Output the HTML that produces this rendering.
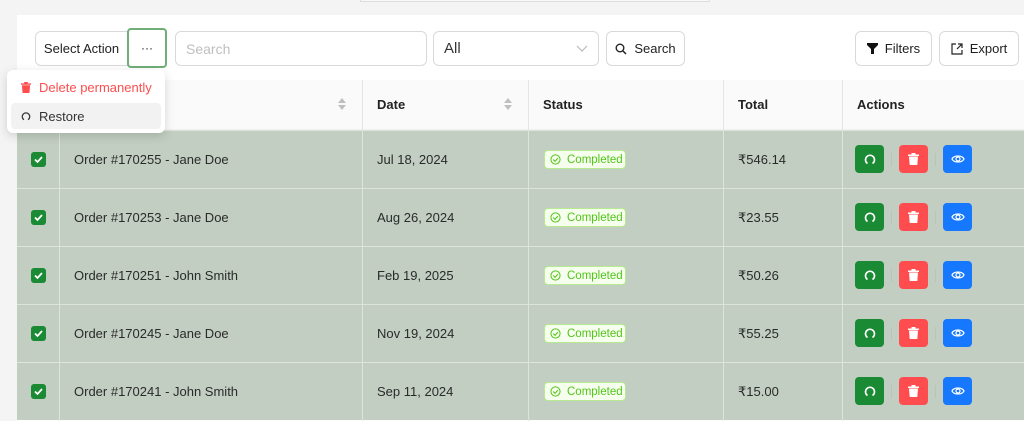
<!DOCTYPE html>
<html><head><style>
*{box-sizing:border-box;margin:0;padding:0}
body{width:1024px;height:421px;overflow:hidden;background:#f4f4f4;font-family:"Liberation Sans",sans-serif;font-size:13px;color:#1f1f1f;position:relative}
.a{position:absolute}
.card{left:17px;top:15px;width:1007px;height:406px;background:#fff}
.btn{position:absolute;border:1px solid #d9d9d9;border-radius:6px;background:#fff;display:flex;align-items:center;justify-content:center;font-size:13px;color:#1f1f1f;gap:7px}
.th{position:absolute;top:80px;height:50px;background:#fafafa;border-bottom:1px solid #f0f0f0;font-weight:bold;font-size:13px;display:flex;align-items:center;padding-left:15px;color:#222}
.sep{position:absolute;width:1px;background:#e5e5e5}
.row{position:absolute;left:17px;width:1007px;height:58px;background:#c2cec2;border-top:1px solid #dde4dc;color:#2a2a2a}
.cell{position:absolute;top:0;height:57px;display:flex;align-items:center}
.cb{position:absolute;left:14px;top:21px;width:15px;height:15px;border-radius:3px;background:#1a8a34}
.badge{position:absolute;left:527px;top:19px;width:82px;height:19px;border:1px solid #b7eb8f;background:#f6ffed;border-radius:4px;color:#52c41a;font-size:11.5px;line-height:19px;padding-left:22px}
.badge svg{position:absolute;left:5px;top:3px}
.ab{position:absolute;top:14px;width:29px;height:28px;border-radius:4px;display:flex;align-items:center;justify-content:center}
.vs{position:absolute;top:22px;width:1px;height:13px;background:#b8c4b8}
.sort{position:absolute;top:98px;width:8px}
</style></head><body>
<div class="a" style="left:360px;top:0;width:350px;height:2px;border:1px solid #ddd;border-top:none;background:#f8f8f8"></div>
<div class="a card"></div>
<div class="btn" style="left:35px;top:31px;width:93px;height:35px;border-radius:6px 0 0 6px">Select Action</div>
<div class="btn" style="left:127px;top:28px;width:40px;height:40px;border:2px solid #6fae77;border-radius:4px;font-size:12px">···</div>
<div class="btn" style="left:175px;top:31px;width:252px;height:35px;justify-content:flex-start;padding-left:10px;color:#bfbfbf;font-size:14px">Search</div>
<div class="btn" style="left:433px;top:31px;width:166px;height:35px;justify-content:space-between;padding:0 10px;font-size:15px;color:#333">All<svg width="12" height="8" viewBox="0 0 12 8"><path d="M1 1l5 5 5-5" fill="none" stroke="#bbb" stroke-width="1.2"/></svg></div>
<div class="btn" style="left:606px;top:31px;width:79px;height:35px"><svg width="12" height="12" viewBox="0 0 12 12"><circle cx="5" cy="5" r="3.8" fill="none" stroke="#222" stroke-width="1.4"/><path d="M8 8l3 3" stroke="#222" stroke-width="1.5"/></svg>Search</div>
<div class="btn" style="left:855px;top:31px;width:77px;height:35px"><svg width="11" height="11" viewBox="0 0 11 11"><path d="M0 0h11v2L7 6v5H4V6L0 2z" fill="#111"/></svg>Filters</div>
<div class="btn" style="left:939px;top:31px;width:80px;height:35px"><svg width="12" height="12" viewBox="0 0 12 12"><path d="M5 1H1v10h10V7M7 1h4v4M11 1L6 6" fill="none" stroke="#222" stroke-width="1.2"/></svg>Export</div>

<div class="th" style="left:17px;width:345px"></div>
<div class="th" style="left:362px;width:166px">Date</div>
<div class="th" style="left:528px;width:195px">Status</div>
<div class="th" style="left:723px;width:119px">Total</div>
<div class="th" style="left:842px;width:182px">Actions</div>
<div class="sep" style="left:362px;top:80px;height:50px"></div>
<div class="sep" style="left:528px;top:80px;height:50px"></div>
<div class="sep" style="left:723px;top:80px;height:50px"></div>
<div class="sep" style="left:842px;top:80px;height:50px"></div>
<svg class="sort" style="left:338px" height="12" viewBox="0 0 8 12"><path d="M4 0l4 5H0z M4 12l4-5H0z" fill="#bfbfbf"/></svg>
<svg class="sort" style="left:504px" height="12" viewBox="0 0 8 12"><path d="M4 0l4 5H0z M4 12l4-5H0z" fill="#bfbfbf"/></svg>

<div class="row" style="top:130px"><div class="cb"><svg width="15" height="15" viewBox="0 0 15 15"><path d="M4 7.5l2.5 2.5L11 5" fill="none" stroke="#fff" stroke-width="1.8"/></svg></div><div class="cell" style="left:57px">Order #170255 - Jane Doe</div><div class="cell" style="left:360px">Jul 18, 2024</div><div class="badge"><svg width="11" height="11" viewBox="0 0 12 12"><circle cx="6" cy="6" r="5" fill="none" stroke="#52c41a" stroke-width="1.1"/><path d="M3.5 6l2 2 3-3.5" fill="none" stroke="#52c41a" stroke-width="1.1"/></svg>Completed</div><div class="cell" style="left:721px">₹546.14</div><div class="ab" style="left:838px;background:#1a8a34"><svg width="12" height="12" viewBox="0 0 12 12"><path d="M3.5 10.5A4.5 4.5 0 1 1 8.5 10.5" fill="none" stroke="#fff" stroke-width="1.6"/></svg></div><div class="vs" style="left:874px"></div><div class="ab" style="left:882px;background:#ff4d4f"><svg width="11" height="12" viewBox="0 0 11 12"><path d="M0 1.5h11v1.5H0zM3.5 0h4v1.5h-4zM1 3.5h9l-.7 8.5H1.7z" fill="#fff"/></svg></div><div class="vs" style="left:918px"></div><div class="ab" style="left:926px;background:#1677ff"><svg width="14" height="10" viewBox="0 0 14 10"><path d="M1 5C3 1 11 1 13 5 11 9 3 9 1 5z" fill="none" stroke="#fff" stroke-width="1.3"/><circle cx="7" cy="5" r="2" fill="none" stroke="#fff" stroke-width="1.3"/></svg></div></div>
<div class="row" style="top:188px"><div class="cb"><svg width="15" height="15" viewBox="0 0 15 15"><path d="M4 7.5l2.5 2.5L11 5" fill="none" stroke="#fff" stroke-width="1.8"/></svg></div><div class="cell" style="left:57px">Order #170253 - Jane Doe</div><div class="cell" style="left:360px">Aug 26, 2024</div><div class="badge"><svg width="11" height="11" viewBox="0 0 12 12"><circle cx="6" cy="6" r="5" fill="none" stroke="#52c41a" stroke-width="1.1"/><path d="M3.5 6l2 2 3-3.5" fill="none" stroke="#52c41a" stroke-width="1.1"/></svg>Completed</div><div class="cell" style="left:721px">₹23.55</div><div class="ab" style="left:838px;background:#1a8a34"><svg width="12" height="12" viewBox="0 0 12 12"><path d="M3.5 10.5A4.5 4.5 0 1 1 8.5 10.5" fill="none" stroke="#fff" stroke-width="1.6"/></svg></div><div class="vs" style="left:874px"></div><div class="ab" style="left:882px;background:#ff4d4f"><svg width="11" height="12" viewBox="0 0 11 12"><path d="M0 1.5h11v1.5H0zM3.5 0h4v1.5h-4zM1 3.5h9l-.7 8.5H1.7z" fill="#fff"/></svg></div><div class="vs" style="left:918px"></div><div class="ab" style="left:926px;background:#1677ff"><svg width="14" height="10" viewBox="0 0 14 10"><path d="M1 5C3 1 11 1 13 5 11 9 3 9 1 5z" fill="none" stroke="#fff" stroke-width="1.3"/><circle cx="7" cy="5" r="2" fill="none" stroke="#fff" stroke-width="1.3"/></svg></div></div>
<div class="row" style="top:246px"><div class="cb"><svg width="15" height="15" viewBox="0 0 15 15"><path d="M4 7.5l2.5 2.5L11 5" fill="none" stroke="#fff" stroke-width="1.8"/></svg></div><div class="cell" style="left:57px">Order #170251 - John Smith</div><div class="cell" style="left:360px">Feb 19, 2025</div><div class="badge"><svg width="11" height="11" viewBox="0 0 12 12"><circle cx="6" cy="6" r="5" fill="none" stroke="#52c41a" stroke-width="1.1"/><path d="M3.5 6l2 2 3-3.5" fill="none" stroke="#52c41a" stroke-width="1.1"/></svg>Completed</div><div class="cell" style="left:721px">₹50.26</div><div class="ab" style="left:838px;background:#1a8a34"><svg width="12" height="12" viewBox="0 0 12 12"><path d="M3.5 10.5A4.5 4.5 0 1 1 8.5 10.5" fill="none" stroke="#fff" stroke-width="1.6"/></svg></div><div class="vs" style="left:874px"></div><div class="ab" style="left:882px;background:#ff4d4f"><svg width="11" height="12" viewBox="0 0 11 12"><path d="M0 1.5h11v1.5H0zM3.5 0h4v1.5h-4zM1 3.5h9l-.7 8.5H1.7z" fill="#fff"/></svg></div><div class="vs" style="left:918px"></div><div class="ab" style="left:926px;background:#1677ff"><svg width="14" height="10" viewBox="0 0 14 10"><path d="M1 5C3 1 11 1 13 5 11 9 3 9 1 5z" fill="none" stroke="#fff" stroke-width="1.3"/><circle cx="7" cy="5" r="2" fill="none" stroke="#fff" stroke-width="1.3"/></svg></div></div>
<div class="row" style="top:304px"><div class="cb"><svg width="15" height="15" viewBox="0 0 15 15"><path d="M4 7.5l2.5 2.5L11 5" fill="none" stroke="#fff" stroke-width="1.8"/></svg></div><div class="cell" style="left:57px">Order #170245 - Jane Doe</div><div class="cell" style="left:360px">Nov 19, 2024</div><div class="badge"><svg width="11" height="11" viewBox="0 0 12 12"><circle cx="6" cy="6" r="5" fill="none" stroke="#52c41a" stroke-width="1.1"/><path d="M3.5 6l2 2 3-3.5" fill="none" stroke="#52c41a" stroke-width="1.1"/></svg>Completed</div><div class="cell" style="left:721px">₹55.25</div><div class="ab" style="left:838px;background:#1a8a34"><svg width="12" height="12" viewBox="0 0 12 12"><path d="M3.5 10.5A4.5 4.5 0 1 1 8.5 10.5" fill="none" stroke="#fff" stroke-width="1.6"/></svg></div><div class="vs" style="left:874px"></div><div class="ab" style="left:882px;background:#ff4d4f"><svg width="11" height="12" viewBox="0 0 11 12"><path d="M0 1.5h11v1.5H0zM3.5 0h4v1.5h-4zM1 3.5h9l-.7 8.5H1.7z" fill="#fff"/></svg></div><div class="vs" style="left:918px"></div><div class="ab" style="left:926px;background:#1677ff"><svg width="14" height="10" viewBox="0 0 14 10"><path d="M1 5C3 1 11 1 13 5 11 9 3 9 1 5z" fill="none" stroke="#fff" stroke-width="1.3"/><circle cx="7" cy="5" r="2" fill="none" stroke="#fff" stroke-width="1.3"/></svg></div></div>
<div class="row" style="top:362px"><div class="cb"><svg width="15" height="15" viewBox="0 0 15 15"><path d="M4 7.5l2.5 2.5L11 5" fill="none" stroke="#fff" stroke-width="1.8"/></svg></div><div class="cell" style="left:57px">Order #170241 - John Smith</div><div class="cell" style="left:360px">Sep 11, 2024</div><div class="badge"><svg width="11" height="11" viewBox="0 0 12 12"><circle cx="6" cy="6" r="5" fill="none" stroke="#52c41a" stroke-width="1.1"/><path d="M3.5 6l2 2 3-3.5" fill="none" stroke="#52c41a" stroke-width="1.1"/></svg>Completed</div><div class="cell" style="left:721px">₹15.00</div><div class="ab" style="left:838px;background:#1a8a34"><svg width="12" height="12" viewBox="0 0 12 12"><path d="M3.5 10.5A4.5 4.5 0 1 1 8.5 10.5" fill="none" stroke="#fff" stroke-width="1.6"/></svg></div><div class="vs" style="left:874px"></div><div class="ab" style="left:882px;background:#ff4d4f"><svg width="11" height="12" viewBox="0 0 11 12"><path d="M0 1.5h11v1.5H0zM3.5 0h4v1.5h-4zM1 3.5h9l-.7 8.5H1.7z" fill="#fff"/></svg></div><div class="vs" style="left:918px"></div><div class="ab" style="left:926px;background:#1677ff"><svg width="14" height="10" viewBox="0 0 14 10"><path d="M1 5C3 1 11 1 13 5 11 9 3 9 1 5z" fill="none" stroke="#fff" stroke-width="1.3"/><circle cx="7" cy="5" r="2" fill="none" stroke="#fff" stroke-width="1.3"/></svg></div></div>

<div class="sep" style="left:59px;top:130px;height:291px;background:#dde4dc"></div>
<div class="sep" style="left:362px;top:130px;height:291px;background:#dde4dc"></div>
<div class="sep" style="left:528px;top:130px;height:291px;background:#dde4dc"></div>
<div class="sep" style="left:723px;top:130px;height:291px;background:#dde4dc"></div>
<div class="sep" style="left:842px;top:130px;height:291px;background:#dde4dc"></div>

<div class="a" style="left:7px;top:70px;width:158px;height:63px;background:#fff;border-radius:6px;box-shadow:0 3px 10px rgba(0,0,0,.15)">
 <div class="a" style="left:14px;top:10px;display:flex;align-items:center;gap:8px;color:#ff4d4f;font-size:13px"><svg width="10" height="11" viewBox="0 0 11 12"><path d="M0 1.5h11v1.5H0zM3.5 0h4v1.5h-4zM1 3.5h9l-.7 8.5H1.7z" fill="#ff4d4f"/></svg>Delete permanently</div>
 <div class="a" style="left:4px;top:33px;width:150px;height:26px;background:#f2f2f2;border-radius:4px;display:flex;align-items:center;gap:8px;padding-left:10px;font-size:13px;color:#333"><svg width="10" height="10" viewBox="0 0 12 12"><path d="M3.5 10.5A4.5 4.5 0 1 1 8.5 10.5" fill="none" stroke="#333" stroke-width="1.5"/></svg>Restore</div>
</div>
</body></html>
